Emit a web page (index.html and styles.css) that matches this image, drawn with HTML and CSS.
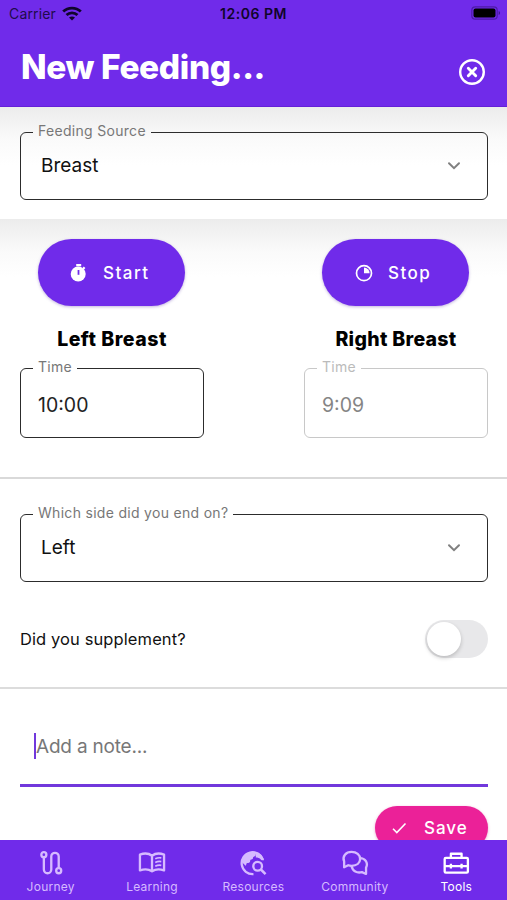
FILE: index.html
```html
<!DOCTYPE html>
<html lang="en">
<head>
<meta charset="utf-8">
<title>New Feeding</title>
<link rel="stylesheet" href="styles.css">
</head>
<body>
<div class="app">
  <header class="header">
    <div class="status">
      <div class="carrier"><span class="carrier-name">Carrier</span>
        <svg width="20" height="15" viewBox="0 0 20 15" fill="none" stroke="#10052b" stroke-width="2.8"><path d="M1.2 5.6C6 .9 14 .9 18.8 5.6"/><path d="M4.5 9c3-2.9 8-2.9 11 0"/><path d="M7 11.6c1.7-1.6 4.3-1.6 6 0l-3 3z" fill="#10052b" stroke="none"/></svg>
      </div>
      <span class="clock">12:06 PM</span>
      <svg class="battery" width="30" height="14" viewBox="0 0 30 14"><rect x=".8" y=".8" width="25.4" height="12.4" rx="3.5" fill="none" stroke="#4d1ba8" stroke-width="1.2"/><rect x="2.5" y="2.5" width="22" height="9" rx="2" fill="#000"/><path d="M27.7 5c1.8.6 1.8 3.4 0 4z" fill="#3d168c"/></svg>
    </div>
    <div class="titlebar">
      <h1>New Feeding...</h1>
      <svg class="close" width="28" height="28" viewBox="0 0 28 28" fill="none" stroke="#fff"><circle cx="14" cy="14" r="11.8" stroke-width="2.4"/><path d="M10.3 10.3l7.4 7.4m0-7.4l-7.4 7.4" stroke-width="2.9" stroke-linecap="round"/></svg>
    </div>
  </header>

  <main class="content">
    <section class="source shade">
      <fieldset class="field select">
        <legend>Feeding Source</legend>
        <span>Breast</span>
        <svg class="chevron" width="14" height="10" viewBox="0 0 14 10"><path d="M2 2.2l5 5 5-5"/></svg>
      </fieldset>
    </section>

    <section class="timers shade">
      <div class="timer">
        <button class="pill">
          <svg width="18" height="20" viewBox="0 0 18 20"><path d="M6.2 1h5v2.3h-5z" fill="#fff"/><circle cx="8.2" cy="11" r="7.5" fill="#fff"/><path d="M12.200 5.200l1.600-1.700 1.600 1.500-1.500 1.700z" fill="#fff"/><path d="M8.500 7v4.800" stroke="#702bea" stroke-width="1.800"/></svg>
          <span>Start</span>
        </button>
        <h2>Left Breast</h2>
        <fieldset class="field time">
          <legend>Time</legend>
          <span>10:00</span>
        </fieldset>
      </div>
      <div class="timer">
        <button class="pill stop">
          <svg width="18" height="20" viewBox="0 0 18 20"><circle cx="9" cy="10.2" r="7.5" fill="none" stroke="#fff" stroke-width="1.7"/><path d="M9 4.600a5.600 5.600 0 0 1 5.600 5.600H9z" fill="#fff"/></svg>
          <span>Stop</span>
        </button>
        <h2 class="right-title">Right Breast</h2>
        <fieldset class="field time disabled">
          <legend>Time</legend>
          <span>9:09</span>
        </fieldset>
      </div>
    </section>

    <section class="details">
      <fieldset class="field select">
        <legend>Which side did you end on?</legend>
        <span>Left</span>
        <svg class="chevron" width="14" height="10" viewBox="0 0 14 10"><path d="M2 2.2l5 5 5-5"/></svg>
      </fieldset>
      <div class="supplement">
        <span>Did you supplement?</span>
        <div class="switch"><div class="knob"></div></div>
      </div>
    </section>

    <section class="note">
      <div class="note-input"><i class="caret"></i><span>Add a note...</span></div>
      <button class="save">
        <svg width="18" height="16" viewBox="0 0 18 16" fill="none" stroke="#fff" stroke-width="1.6"><path d="M2 8.800l3.800 3.700L14.500 3.500"/></svg>
        <span>Save</span>
      </button>
    </section>
  </main>

  <nav class="tabs">
    <div class="tab">
      <svg viewBox="0 0 28 28"><circle cx="6.3" cy="5" r="2.7"/><circle cx="22.300" cy="22.300" r="2.700"/><path d="M6.300 7.700v13.300a4 4 0 0 0 8 0V7a4 4 0 0 1 8 0v12.600"/></svg>
      <span>Journey</span>
    </div>
    <div class="tab">
      <svg viewBox="0 0 28 28"><path d="M14 6.200C10.500 3.500 5 3.500 1 5v17c4-1.500 9.500-1.500 13 1 3.500-2.500 9-2.500 13-1V5c-4-1.500-9.500-1.500-13 1.200zM14 6.200V23"/><path d="M17.500 9.500q3-1.600 6.500-1M17.500 13.500q3-1.600 6.500-1M17.500 17.500q3-1.600 6.500-1" stroke-width="1.800"/></svg>
      <span>Learning</span>
    </div>
    <div class="tab">
      <svg viewBox="0 0 28 28"><path d="M3 14C2.500 7 7 3 12 2h5v3c0 2-3 1.500-3 3.500s-3 1-3 3-1.500 2.500-3 2.500-1 2.500-2 3z" fill="currentColor" stroke="none"/><path d="M24.800 10.500A11.800 11.800 0 1 0 14.500 26"/><path d="M17 2.500c5 1 7.800 4.500 8.800 8.500h-2.500C21 8 19 8.500 17 8z" fill="currentColor" stroke="none"/><circle cx="19" cy="17.500" r="4.700"/><path d="M22.500 21l5 5" stroke-width="2.700"/></svg>
      <span>Resources</span>
    </div>
    <div class="tab">
      <svg viewBox="0 0 28 28"><path d="M2.300 18.500v-6.200C0 6.800 4.200 2 10.300 2c5.400 0 9.200 3.200 9.200 7.600s-3.800 7.400-9.200 7.400c-1.300 0-2.500-.2-3.600-.6z"/><path d="M19.300 8.800c5.800 0 9.200 5.200 6.600 10.200v6.800l-4.400-2c-5.200 1.500-10.200-1-11.200-6.500"/></svg>
      <span>Community</span>
    </div>
    <div class="tab active">
      <svg viewBox="0 0 28 28"><rect x="1.800" y="8.500" width="25" height="15.800" rx="1.200"/><path d="M8.500 8.500V4h11.500v4.500M2 17.300h24.500M8.500 14.800v5.200M20 14.800v5.200"/></svg>
      <span>Tools</span>
    </div>
  </nav>
</div>
</body>
</html>
```

FILE: styles.css
```css
* { box-sizing: border-box; }
body { margin: 0; font-family: Inter, "Liberation Sans", sans-serif; color: #111; background: #fff; }
h1, h2 { margin: 0; }
button { border: 0; font-family: inherit; color: #fff; padding: 0; }
svg { display: block; flex: none; }

.app { height: 900px; display: flex; flex-direction: column; overflow: hidden; }

.header { height: 107px; flex: none; background: #702bea; border-bottom: 1px solid #6420d8; }
.status { height: 28px; display: grid; grid-template-columns: 1fr auto 1fr; align-items: center; padding: 0 8px 1px 9px; }
.carrier { display: flex; align-items: center; gap: 6px; font-size: 14px; letter-spacing: .15px; color: #210b4c; }
.carrier svg { margin-top: -1px; }
.clock { font-size: 14px; font-weight: 600; color: #10052b; letter-spacing: .5px; margin-right: 1px; }
.battery { justify-self: end; margin: -1px -2px 0 0; }
.titlebar { display: flex; justify-content: space-between; padding: 18px 21px 0; }
h1 { color: #fff; font-size: 33.5px; line-height: 42px; font-weight: 800; letter-spacing: -.4px; }
.close { margin-top: 12px; }

.content { flex: 1; min-height: 0; overflow: hidden; }
.shade { background: linear-gradient(#ececec, #fafafa 32px, #fff 58px); }
.source { height: 112px; padding: 15px 19px 0 20px; }
.field { margin: 0; min-width: 0; padding: 0 0 0 12px; border: 1.5px solid #2c2c2c; border-radius: 6px; }
.field legend { height: 20px; line-height: 18px; padding: 0 5px; color: #777; font-size: 14px; letter-spacing: .3px; white-space: nowrap; }
.select { height: 78px; display: flex; align-items: center; justify-content: space-between; padding: 0 26px 10px 20px; font-size: 19px; }
.select legend { margin-left: -8px; }
.chevron { fill: none; stroke: #808080; stroke-width: 2; stroke-linecap: round; }

.timers { height: 260px; display: flex; justify-content: space-between; align-items: flex-start; padding: 20px 19px 0 20px; border-bottom: 2px solid #d9d9d9; }
.timer { width: 184px; display: flex; flex-direction: column; align-items: center; }
.pill { width: 147px; height: 67px; margin-right: 1px; border-radius: 34px; background: #702bea; display: flex; align-items: center; padding-left: 32px; gap: 15px; font-size: 17px; font-weight: 500; letter-spacing: 1.5px; box-shadow: 0 1px 3px rgba(80, 40, 160, .35); }
.stop { padding-left: 33px; }
h2 { margin-top: 20px; font-size: 19.5px; line-height: 26px; font-weight: 800; letter-spacing: .5px; color: #000; white-space: nowrap; }
.right-title { letter-spacing: .3px; }
.time { width: 184px; height: 80px; margin-top: 6px; font-size: 19.5px; }
.time span { display: block; padding: 14px 0 0 5px; line-height: 26px; color: #222; }
.time.disabled { border-color: #c8c8c8; }
.time.disabled legend { color: #bbb; }
.time.disabled span { color: #858585; }

.details { height: 210px; padding: 25px 19px 0 20px; border-bottom: 2px solid #dcdcdc; }
.supplement { display: flex; justify-content: space-between; align-items: center; margin-top: 38px; font-size: 16.5px; letter-spacing: .1px; }
.switch { width: 63px; height: 38px; border-radius: 19px; background: #e8e8ea; padding: 2px; }
.knob { width: 34px; height: 34px; border-radius: 50%; background: #fff; box-shadow: 0 2px 4px rgba(0, 0, 0, .2); }

.note { padding: 24px 19px 0 20px; }
.note-input { height: 74px; display: flex; align-items: center; border-bottom: 3px solid #7138dc; padding: 0 0 5px 14px; font-size: 19px; letter-spacing: -.2px; color: #777; }
.caret { width: 2px; height: 26px; background: #7138dc; }
.save { width: 113px; height: 44px; margin: 19px 0 0 auto; border-radius: 22px; background: #eb2198; display: flex; align-items: center; padding-left: 16px; gap: 15px; font-size: 17px; font-weight: 500; letter-spacing: 1px; box-shadow: 0 1px 3px rgba(200, 30, 130, .4); }

.tabs { height: 60px; flex: none; display: grid; grid-template-columns: repeat(5, 1fr); background: #702bea; }
.tab { display: flex; flex-direction: column; align-items: center; padding-top: 10px; gap: 3px; color: #d6baff; font-size: 12px; line-height: 15px; letter-spacing: .25px; }
.tab svg { width: 28px; height: 26px; fill: none; stroke: currentColor; stroke-width: 2.5; stroke-linejoin: round; }
.tab.active { color: #fff; }
```
